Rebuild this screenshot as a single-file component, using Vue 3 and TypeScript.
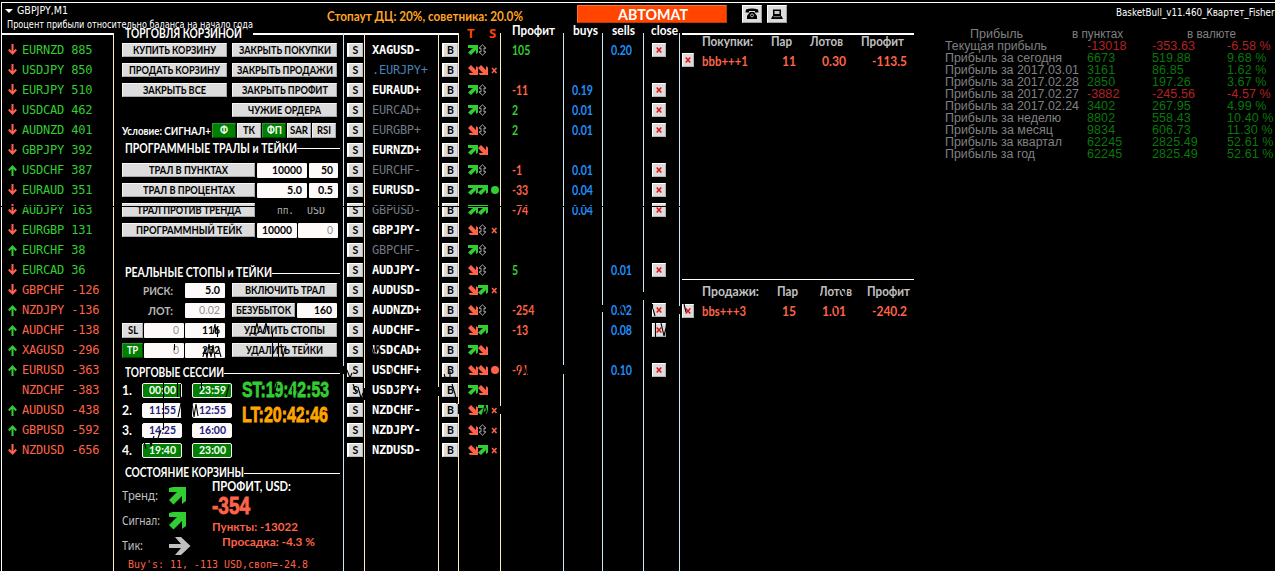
<script setup lang="ts">
import type { Directive } from 'vue'

/** Stretches a text horizontally so that it occupies exactly the given width. */
const vFit: Directive<HTMLElement, number> = {
  mounted(el, binding) {
    const natural = el.getBoundingClientRect().width
    if (!natural || !binding.value) return
    el.style.transform = `scaleX(${binding.value / natural})`
    el.style.marginRight = `${binding.value - natural}px`
  },
}

type Dir = 'up' | 'down' | ''
interface Strength { dir: Dir; pair: string; value: number }
const strengths: Strength[] = [
  { dir: 'down', pair: 'EURNZD', value: 885 },
  { dir: 'down', pair: 'USDJPY', value: 850 },
  { dir: 'down', pair: 'EURJPY', value: 510 },
  { dir: 'down', pair: 'USDCAD', value: 462 },
  { dir: 'down', pair: 'AUDNZD', value: 401 },
  { dir: 'down', pair: 'GBPJPY', value: 392 },
  { dir: 'up', pair: 'USDCHF', value: 387 },
  { dir: 'down', pair: 'EURAUD', value: 351 },
  { dir: 'down', pair: 'AUDJPY', value: 163 },
  { dir: 'down', pair: 'EURGBP', value: 131 },
  { dir: 'up', pair: 'EURCHF', value: 38 },
  { dir: 'down', pair: 'EURCAD', value: 36 },
  { dir: 'down', pair: 'GBPCHF', value: -126 },
  { dir: 'up', pair: 'NZDJPY', value: -136 },
  { dir: 'up', pair: 'AUDCHF', value: -138 },
  { dir: 'up', pair: 'XAGUSD', value: -296 },
  { dir: 'up', pair: 'EURUSD', value: -363 },
  { dir: '', pair: 'NZDCHF', value: -383 },
  { dir: 'up', pair: 'AUDUSD', value: -438 },
  { dir: 'up', pair: 'GBPUSD', value: -592 },
  { dir: 'down', pair: 'NZDUSD', value: -656 },
]

/* sig: trend and signal marks (u = up, d = down, n = neutral), then x = cross, o = dot */
interface Pair { name: string; tone: string; sig: string; profit?: string; buys?: string; sells?: string }
const pairs: Pair[] = [
  { name: 'XAGUSD-', tone: 'lit', sig: 'un', profit: '105', sells: '0.20' },
  { name: '.EURJPY+', tone: 'blue', sig: 'ddx' },
  { name: 'EURAUD+', tone: 'lit', sig: 'un', profit: '-11', buys: '0.19' },
  { name: 'EURCAD+', tone: 'off', sig: 'un', profit: '2', buys: '0.01' },
  { name: 'EURGBP+', tone: 'off', sig: 'dn', profit: '2', buys: '0.01' },
  { name: 'EURNZD+', tone: 'lit', sig: 'ud' },
  { name: 'EURCHF-', tone: 'off', sig: 'un', profit: '-1', buys: '0.01' },
  { name: 'EURUSD-', tone: 'lit', sig: 'uuo', profit: '-33', buys: '0.04' },
  { name: 'GBPUSD-', tone: 'off', sig: 'uu', profit: '-74', buys: '0.04' },
  { name: 'GBPJPY-', tone: 'lit', sig: 'dnx' },
  { name: 'GBPCHF-', tone: 'off', sig: 'un' },
  { name: 'AUDJPY-', tone: 'lit', sig: 'dn', profit: '5', sells: '0.01' },
  { name: 'AUDUSD-', tone: 'lit', sig: 'dux' },
  { name: 'AUDNZD+', tone: 'lit', sig: 'dn', profit: '-254', sells: '0.02' },
  { name: 'AUDCHF-', tone: 'lit', sig: 'du', profit: '-13', sells: '0.08' },
  { name: 'USDCAD+', tone: 'lit', sig: 'ud' },
  { name: 'USDCHF+', tone: 'lit', sig: 'ddo', profit: '-91', sells: '0.10' },
  { name: 'USDJPY+', tone: 'lit', sig: 'ud' },
  { name: 'NZDCHF-', tone: 'lit', sig: 'dux' },
  { name: 'NZDJPY-', tone: 'lit', sig: 'dnx' },
  { name: 'NZDUSD-', tone: 'lit', sig: 'dux' },
]
const digitsWidth = (s: string) => [...s].reduce((w, c) => w + (c === '-' ? 4 : c === '.' ? 3.4 : 6.1), 0)

const sessions = [
  { from: '00:00', to: '23:59', active: true },
  { from: '11:55', to: '12:55', active: false },
  { from: '14:25', to: '16:00', active: false },
  { from: '19:40', to: '23:00', active: true },
]

interface Basket { kind: string; title: [string, number]; heads: string[]; cells: [string, number][] }
const baskets: Basket[] = [
  { kind: 'buy', title: ['Покупки:', 51], heads: ['Пар', 'Лотов', 'Профит'], cells: [['bbb+++1', 46], ['11', 14], ['0.30', 24], ['-113.5', 35]] },
  { kind: 'sell', title: ['Продажи:', 57], heads: ['Пар', 'Лотов', 'Профит'], cells: [['bbs+++3', 44], ['15', 14], ['1.01', 24], ['-240.2', 35]] },
]
const headWidths = [21, 33, 43]

const report: { label: string; w: number; v: string[] }[] = [
  { label: 'Текущая прибыль', w: 102, v: ['-13018', '-353.63', '-6.58 %'] },
  { label: 'Прибыль за сегодня', w: 117, v: ['6673', '519.88', '9.68 %'] },
  { label: 'Прибыль за 2017.03.01', w: 134, v: ['3161', '86.85', '1.62 %'] },
  { label: 'Прибыль за 2017.02.28', w: 134, v: ['2850', '197.26', '3.67 %'] },
  { label: 'Прибыль за 2017.02.27', w: 134, v: ['-3882', '-245.56', '-4.57 %'] },
  { label: 'Прибыль за 2017.02.24', w: 134, v: ['3402', '267.95', '4.99 %'] },
  { label: 'Прибыль за неделю', w: 116, v: ['8802', '558.43', '10.40 %'] },
  { label: 'Прибыль за месяц', w: 108, v: ['9834', '606.73', '11.30 %'] },
  { label: 'Прибыль за квартал', w: 117, v: ['62245', '2825.49', '52.61 %'] },
  { label: 'Прибыль за год', w: 90, v: ['62245', '2825.49', '52.61 %'] },
]
</script>

<template>
  <main class="chart">
    <header class="top">
      <div class="symbol">
        <div class="symbol-name">
          <svg width="8" height="4" viewBox="0 0 8 4"><path d="M0 0H8L4 4Z" fill="#fff" /></svg>
          <span v-fit="51" class="t">GBPJPY,M1</span>
        </div>
        <div class="symbol-note"><span v-fit="246" class="t">Процент прибыли относительно баланса на начало года</span></div>
      </div>
      <div class="stopout"><span v-fit="196" class="t">Стопаут ДЦ: 20%, советника: 20.0%</span></div>
      <button class="auto"><span v-fit="70" class="t">АВТОМАТ</span></button>
      <button class="tool phone">
        <svg width="14" height="12" viewBox="0 0 14 12">
          <path d="M1 1.5Q7-.5 13 1.500L13.5 4.5H10V3H4V4.5H.5Z" fill="#000" />
          <path d="M5 4H9L12 8V11H2V8Z" fill="#000" />
          <circle cx="7" cy="7.400" r="1.500" fill="none" stroke="#ddd" stroke-width=".8" />
        </svg>
      </button>
      <button class="tool">
        <svg width="12" height="12" viewBox="0 0 12 12">
          <path d="M2 1.500H10V8H2Z" fill="#000" /><path d="M3.500 3H8.500V6H3.500Z" fill="#c8c8c8" />
          <path d="M1.500 8H10.500L12 11H0Z" fill="#000" /><path d="M2.500 8.700H9.500" stroke="#ccc" stroke-width=".7" />
        </svg>
      </button>
      <div class="expert"><span v-fit="162" class="t">BasketBull_v11.460_Квартет_Fisher(</span></div>
    </header>

    <div class="board">
      <section class="col strengths">
        <div v-for="s in strengths" :key="s.pair" class="row" :class="s.value > 0 ? 'green' : 'red'">
          <svg class="thin" :class="s.dir" width="9" height="12" viewBox="0 0 9 12">
            <path v-if="s.dir === 'down'" d="M4.5 0V9M.8 5.500L4.500 9.600L8.200 5.500" />
            <path v-if="s.dir === 'up'" d="M4.500 12V3M.8 6.500L4.500 2.400L8.200 6.500" />
          </svg>
          <span class="mono">{{ s.pair }} {{ s.value }}</span>
        </div>
      </section>

      <section class="col control">
        <div class="caption first"><span v-fit="117" class="t">ТОРГОВЛЯ КОРЗИНОЙ</span><i /></div>
        <div class="row">
          <button class="btn w105"><span v-fit="83" class="t">КУПИТЬ КОРЗИНУ</span></button>
          <button class="btn w105 gap5"><span v-fit="92" class="t">ЗАКРЫТЬ ПОКУПКИ</span></button>
        </div>
        <div class="row">
          <button class="btn w105"><span v-fit="91" class="t">ПРОДАТЬ КОРЗИНУ</span></button>
          <button class="btn w105 gap5"><span v-fit="96" class="t">ЗАКРЫТЬ ПРОДАЖИ</span></button>
        </div>
        <div class="row">
          <button class="btn w105"><span v-fit="63" class="t">ЗАКРЫТЬ ВСЕ</span></button>
          <button class="btn w105 gap5"><span v-fit="86" class="t">ЗАКРЫТЬ ПРОФИТ</span></button>
        </div>
        <div class="row end"><button class="btn w105"><span v-fit="73" class="t">ЧУЖИЕ ОРДЕРА</span></button></div>
        <div class="row cond">
          <span v-fit="89" class="t">Условие: СИГНАЛ+</span>
          <button class="btn tall on"><span v-fit="8" class="t">Ф</span></button>
          <button class="btn tall"><span v-fit="12" class="t">ТК</span></button>
          <button class="btn tall on"><span v-fit="15" class="t">ФП</span></button>
          <button class="btn tall"><span v-fit="18" class="t">SAR</span></button>
          <button class="btn tall"><span v-fit="14" class="t">RSI</span></button>
        </div>

        <div class="caption up"><span v-fit="172" class="t">ПРОГРАММНЫЕ ТРАЛЫ и ТЕЙКИ</span><i /></div>
        <div class="row">
          <button class="btn w133"><span v-fit="79" class="t">ТРАЛ В ПУНКТАХ</span></button>
          <span class="field w50"><span v-fit="30" class="t">10000</span></span>
          <span class="field w30"><span v-fit="12" class="t">50</span></span>
        </div>
        <div class="row">
          <button class="btn w133"><span v-fit="92" class="t">ТРАЛ В ПРОЦЕНТАХ</span></button>
          <span class="field w50"><span v-fit="15" class="t">5.0</span></span>
          <span class="field w30"><span v-fit="15" class="t">0.5</span></span>
        </div>
        <div class="row">
          <button class="btn w133"><span v-fit="104" class="t">ТРАЛ ПРОТИВ ТРЕНДА</span></button>
          <span class="units"><span v-fit="17" class="t">пп.</span><span v-fit="18" class="t">USD</span></span>
        </div>
        <div class="row">
          <button class="btn w133"><span v-fit="106" class="t">ПРОГРАММНЫЙ ТЕЙК</span></button>
          <span class="field w40"><span v-fit="30" class="t">10000</span></span>
          <span class="field w40 dim"><span v-fit="6" class="t">0</span></span>
        </div>
        <div class="row" />

        <div class="caption"><span v-fit="147" class="t">РЕАЛЬНЫЕ СТОПЫ и ТЕЙКИ</span><i /></div>
        <div class="row">
          <span class="flabel"><span v-fit="30" class="t">РИСК:</span></span>
          <span class="field w40"><span v-fit="15" class="t">5.0</span></span>
          <button class="btn w105 gap7"><span v-fit="80" class="t">ВКЛЮЧИТЬ ТРАЛ</span></button>
        </div>
        <div class="row">
          <span class="flabel"><span v-fit="25" class="t">ЛОТ:</span></span>
          <span class="field w40 dim"><span v-fit="21" class="t">0.02</span></span>
          <button class="btn w63 gap7"><span v-fit="55" class="t">БЕЗУБЫТОК</span></button>
          <span class="field w40"><span v-fit="18" class="t">160</span></span>
        </div>
        <div class="row">
          <button class="btn tall sq"><span v-fit="10" class="t">SL</span></button>
          <span class="field w40 dim"><span v-fit="6" class="t">0</span></span>
          <span class="field w40"><span v-fit="18" class="t">116</span></span>
          <button class="btn w105 gap7"><span v-fit="81" class="t">УДАЛИТЬ СТОПЫ</span></button>
        </div>
        <div class="row">
          <button class="btn tall sq on"><span v-fit="11" class="t">TP</span></button>
          <span class="field w40 dim"><span v-fit="6" class="t">0</span></span>
          <span class="field w40"><span v-fit="18" class="t">232</span></span>
          <button class="btn w105 gap7"><span v-fit="77" class="t">УДАЛИТЬ ТЕЙКИ</span></button>
        </div>

        <div class="caption"><span v-fit="99" class="t">ТОРГОВЫЕ СЕССИИ</span><i /></div>
        <div class="times">
          <div class="sessions">
            <div v-for="(s, i) in sessions" :key="i" class="row">
              <span class="num"><span v-fit="10" class="t">{{ i + 1 }}.</span></span>
              <span class="field time" :class="{ active: s.active }"><span v-fit="27" class="t">{{ s.from }}</span></span>
              <span class="field time" :class="{ active: s.active }"><span v-fit="27" class="t">{{ s.to }}</span></span>
            </div>
          </div>
          <div class="clocks">
            <div class="impact st"><span v-fit="87" class="t">ST:19:42:53</span></div>
            <div class="impact lt"><span v-fit="86" class="t">LT:20:42:46</span></div>
          </div>
        </div>

        <div class="caption"><span v-fit="119" class="t">СОСТОЯНИЕ КОРЗИНЫ</span><i /></div>
        <div class="state">
          <div class="trends">
            <div><span v-fit="36" class="t">Тренд:</span></div>
            <svg width="18" height="18" viewBox="0 0 18 18"><path d="M0 1L4 0H17V14L13 17V9L4.500 17.500L0 13L8 5H0Z" fill="#32cd32" /></svg>
            <div><span v-fit="38" class="t">Сигнал:</span></div>
            <svg width="18" height="18" viewBox="0 0 18 18"><path d="M0 1L4 0H17V14L13 17V9L4.500 17.500L0 13L8 5H0Z" fill="#32cd32" /></svg>
            <div><span v-fit="21" class="t">Тик:</span></div>
            <svg width="22" height="18" viewBox="0 0 22 18"><path d="M0 7H12L6 0H12L21.500 9L12 18H6L12 11H0Z" fill="#c0c0c0" /></svg>
          </div>
          <div class="result">
            <div class="ptitle"><span v-fit="79" class="t">ПРОФИТ, USD:</span></div>
            <div class="impact total"><span v-fit="38" class="t">-354</span></div>
            <div class="points"><span v-fit="86" class="t">Пункты: -13022</span></div>
            <div class="drop"><span v-fit="93" class="t">Просадка: -4.3 %</span></div>
          </div>
        </div>
        <div class="summary"><span v-fit="180" class="t">Buy's: 11, -113 USD,своп=-24.8</span></div>
      </section>

      <section class="col ice sell-btns"><div v-for="p in pairs" :key="p.name" class="row"><button class="key">S</button></div></section>
      <section class="col names">
        <div v-for="p in pairs" :key="p.name" class="row" :class="p.tone"><span class="mono">{{ p.name }}</span></div>
      </section>
      <section class="col buy-btns"><div v-for="p in pairs" :key="p.name" class="row"><button class="key">B</button></div></section>
      <section class="col marks">
        <div class="head ts"><span>T</span><span>S</span></div>
        <div v-for="p in pairs" :key="p.name" class="row">
          <svg v-for="(c, i) in p.sig.split('')" :key="i" :class="'m' + i" width="10" height="12" viewBox="0 0 10 12">
            <path v-if="c === 'u'" d="M0 1H10V8.500L8 10V6L3 11L0 8.500L5 4H0Z" fill="#32cd32" />
            <path v-else-if="c === 'd'" d="M10 11H2L.5 9H5L0 4L3 1L8 6V2L10 3.500Z" fill="#ff6347" />
            <path v-else-if="c === 'n'" d="M4.500 .8L8 4.200H6V7.800H8L4.500 11.200L1 7.800H3V4.200H1Z" fill="none" stroke="#b8b8b8" stroke-width=".9" />
            <path v-else-if="c === 'x'" d="M2 4L6.500 9M6.500 4L2 9" stroke="#ff6347" stroke-width="1.500" />
            <circle v-else cx="5" cy="6" r="4" :fill="p.sig[0] === 'u' ? '#32cd32' : '#ff6347'" />
          </svg>
        </div>
      </section>
      <section class="col profit">
        <div class="head"><span v-fit="43" class="t">Профит</span></div>
        <div v-for="p in pairs" :key="p.name" class="row" :class="p.profit?.startsWith('-') ? 'red' : 'green'">
          <span v-if="p.profit" v-fit="digitsWidth(p.profit)" class="t">{{ p.profit }}</span>
        </div>
      </section>
      <section class="col ice buys">
        <div class="head"><span v-fit="25" class="t">buys</span></div>
        <div v-for="p in pairs" :key="p.name" class="row"><span v-if="p.buys" v-fit="21" class="t">{{ p.buys }}</span></div>
      </section>
      <section class="col ice sells">
        <div class="head"><span v-fit="23" class="t">sells</span></div>
        <div v-for="p in pairs" :key="p.name" class="row"><span v-if="p.sells" v-fit="21" class="t">{{ p.sells }}</span></div>
      </section>
      <section class="col ice close">
        <div class="head"><span v-fit="27" class="t">close</span></div>
        <div v-for="p in pairs" :key="p.name" class="row">
          <button v-if="p.profit" class="kill"><svg width="6" height="6" viewBox="0 0 6 6"><path d="M.7 .5L5.300 5.500M5.300 .5L.7 5.500" /></svg></button>
        </div>
      </section>

      <section class="col ice baskets">
        <div v-for="b in baskets" :key="b.kind" class="basket" :class="b.kind">
          <div class="bhead">
            <span class="c0"><span v-fit="b.title[1]" class="t">{{ b.title[0] }}</span></span>
            <span v-for="(h, i) in b.heads" :key="h"><span v-fit="headWidths[i]" class="t">{{ h }}</span></span>
          </div>
          <div class="brow">
            <button class="kill"><svg width="6" height="6" viewBox="0 0 6 6"><path d="M.7 .5L5.300 5.500M5.300 .5L.7 5.500" /></svg></button>
            <span v-for="(c, i) in b.cells" :key="i"><span v-fit="c[1]" class="t">{{ c[0] }}</span></span>
          </div>
        </div>
      </section>

      <section class="report">
        <div class="rhead">
          <span><span v-fit="53" class="t">Прибыль</span></span><span><span v-fit="51" class="t">в пунктах</span></span><span><span v-fit="49" class="t">в валюте</span></span>
        </div>
        <div v-for="r in report" :key="r.label" class="rrow" :class="{ loss: r.v[0].startsWith('-') }">
          <span><span v-fit="r.w" class="t">{{ r.label }}</span></span>
          <span v-for="v in r.v" :key="v" class="val">{{ v }}</span>
        </div>
      </section>
    </div>

    <!-- black price line of the chart, drawn above the panel objects -->
    <svg class="price" width="1275" height="571" viewBox="0 0 1275 571">
      <path d="M0 206.500H682" />
      <path d="M213 334L215 324L216 334M217.500 327V337M203 357L205 348L207 358L209 344L211 357L213 345L215 358M218 346L221 357" />
      <path d="M254 335L257 323L259 333M263 333L266 323L269 334M272.500 333V357M278.500 343V357M281 344L283 357L285 348" />
      <path d="M163.500 383V398M163.500 403V430M177.500 383V397M180.500 384V398M178 417L181 403M181.500 403V417M201.500 383V390M226 397L229 385M192 403L194 417L196 404L198 416" />
      <path d="M143 437L146 449M149 438L151 446L154 436M158 438L161 430M174.500 350V344" />
      <path d="M274 394L277 383M286 395L289 385M292.500 386V396M296 397L298 388M304 410L306 420" />
      <path d="M347 370L350 378L352 373M353 384L356 392M358 387L361 398L364 391M343.500 366V374M364.500 388V400M438.500 387V396M444 374L446 380M450 371V380M452 384L455 394L457 404M458.500 404V414M500.500 406V414" />
      <path d="M372 345L375 357L378 346L381 356M391 368V376M397 390L401 385M404 392L408 386M410 412L414 405M482 416L485 405L488 415" />
      <path d="M517 376L520 366M521 377L524 366L527 376M619 314L622 306L625 314M652.500 304V309M653 309L655 316M655.500 323V337M661 323L664 336L667 324M602.500 305V312M643.500 292V300M563.500 365V374M679.500 306V314M684 304L686 312" />
      <path d="M820 297L817 286M841 289L844 296L847 288M834 307L837 315" />
    </svg>
  </main>
</template>

<style>
html, body { margin: 0; background: #000; overflow: hidden; }
</style>

<style scoped>
.chart { position: relative; width: 1275px; height: 571px; overflow: hidden; background: #000; color: #fff; font-family: Lato, "Noto Sans", sans-serif; font-weight: 700; font-size: 12px; }
.chart, .chart * { box-sizing: border-box; }
.t { display: inline-block; white-space: pre; transform-origin: 0 50%; flex: none; }
svg { display: block; flex: none; }
button { font: inherit; padding: 0; margin: 0; border: 0; border-radius: 0; flex: none; display: flex; align-items: center; justify-content: center; white-space: nowrap; }

.top { display: flex; height: 22px; margin-left: 1px; border-top: 1px solid #fff; border-left: 1px solid #fff; margin-top: 2px; }
.symbol { flex: none; width: 325px; font: 400 11px/14px "DejaVu Sans Condensed", "DejaVu Sans", sans-serif; padding-left: 3px; }
.symbol-name { display: flex; align-items: center; gap: 4px; height: 16px; }
.symbol-note { padding-left: 2px; line-height: 12px; }
.stopout { flex: none; width: 250px; color: #ffa520; line-height: 27px; font-size: 12.500px; }
.auto { width: 150px; height: 18px; margin-top: 2px; background: #ff4500; border: 1px solid; border-color: #ff7038 #c03808 #c03808 #ff7038; color: #fff; font-size: 15px; padding-left: 2px; }
.tool { width: 20px; height: 18px; margin-top: 2px; background: #dcdcdc; border: 1px solid; border-color: #fff #a0a0a0 #a0a0a0 #fff; margin-left: 5px; }
.phone { margin-left: 15px; }
.expert { flex: none; margin-left: 329px; font: 400 10.500px/18px "DejaVu Sans Condensed", "DejaVu Sans", sans-serif; white-space: nowrap; }

.board { display: grid; grid-template-columns: 112px 230px 21px 74px 20px 42px 63px 39px 41px 36px 266px 330px; height: 547px; margin-left: 1px; }
.col { padding-top: 16px; background: linear-gradient(#ffeec0, #ffeec0) 0 9px / 1px 100% no-repeat; min-width: 0; height: 547px; }
.ice { background-image: linear-gradient(#c4e8f4, #c4e8f4); }
.strengths { background: linear-gradient(#fff, #fff) 0 0 / 1px 100% no-repeat, linear-gradient(#fff, #fff) 0 9px / 112px 2px no-repeat; }
.row { display: flex; align-items: center; height: 20px; white-space: nowrap; }
.green { color: #32cd32; }
.red { color: #ff6347; }
.mono { font: 400 12px/18px "DejaVu Sans Mono", monospace; letter-spacing: -.2px; white-space: pre; }
.strengths .row { padding-left: 7px; gap: 5px; }
.thin { fill: none; stroke-width: 2; }
.thin.down { stroke: #ff6347; }
.thin.up { stroke: #32cd32; }

.control { padding-left: 9px; padding-top: 0; }
.caption { display: flex; align-items: center; height: 20px; padding: 6px 3px 0 3px; line-height: 14px; font-size: 12.500px; }
.caption i { flex: 1; height: 1px; background: #fff; }
.caption.first { height: 16px; padding-top: 3px; padding-right: 0; }
.caption.first i { height: 2px; margin-left: 11px; }
.caption.up { padding-top: 0; padding-bottom: 3px; }
.btn { height: 14px; background: #dcdcdc; color: #000; border: 1px solid; border-color: #f6f6f6 #a8a8a8 #a8a8a8 #f6f6f6; font-size: 11.500px; line-height: 12px; }
.w105 { width: 105px; }
.w133 { width: 133px; }
.w63 { width: 63px; }
.gap5 { margin-left: 5px; }
.gap7 { margin-left: 7px; }
.end { padding-left: 110px; }
.tall { height: 15px; }
.on { background: #008000; color: #fff; border-color: #389038 #004800 #004800 #389038; }
.cond { font-size: 12px; }
.cond .btn { width: 24px; margin-left: 1px; }
.sq { width: 21px; }
.field { display: flex; align-items: center; justify-content: flex-end; flex: none; height: 15px; background: #fffafa; color: #000; border-radius: 1px; padding-right: 5px; line-height: 14px; margin-left: 1px; }
.w50 { width: 50px; margin-left: 2px; }
.w30 { width: 29px; margin-left: 2px; }
.w40 { width: 40px; }
.w133 + .w40 { margin-left: 2px; }
.w63 + .w40 { margin-left: 2px; }
.dim { color: #909090; font-weight: 400; }
.units { display: flex; gap: 13px; padding-left: 22px; color: #b0b0b0; font: 400 10.500px/14px "DejaVu Sans Mono", monospace; }
.flabel { display: flex; justify-content: flex-end; width: 51px; margin-right: 11px; color: #b8b8b8; }
.num { width: 20px; font-size: 13px; }
.times { display: flex; }
.sessions { width: 120px; }
.time { width: 40px; margin: 0 10px 0 0; justify-content: center; padding: 0; color: #20207a; border: 1px solid #fffafa; border-radius: 2px; height: 15px; }
.time.active { background: #008000; color: #fff; }
.impact { font: 700 22px/24px "Liberation Sans", sans-serif; -webkit-text-stroke: .8px currentColor; }
.st { color: #32cd32; height: 25px; line-height: 19px; }
.lt { color: #ffa500; line-height: 19px; }
.state { display: flex; height: 74px; }
.trends { display: grid; grid-template-columns: 47px 24px; grid-auto-rows: 25px; width: 90px; padding-top: 3px; align-items: center; color: #c0c0c0; font: 400 12.500px/16px "Noto Sans", sans-serif; }
.ptitle { line-height: 13px; font-size: 12.500px; }
.total { color: #ff6347; height: 26px; font-size: 23px; line-height: 27px; }
.points, .drop { color: #ff6347; line-height: 15px; }
.drop { padding-left: 10px; }
.summary { padding: 2px 0 0 6px; color: #ff6347; font: 400 10.500px/16px "DejaVu Sans Mono", monospace; }

.key { width: 16px; height: 14px; margin-left: 4px; background: #dcdcdc; color: #000; border: 1px solid; border-color: #fff #b8b8b8 #b8b8b8 #fff; border-left-width: 2px; font-size: 10.500px; line-height: 12px; }
.sell-btns { background: linear-gradient(#c4e8f4, #c4e8f4) 0 9px / 1px 100% no-repeat, linear-gradient(#fff, #fff) 0 9px / 100% 2px no-repeat; }
.names, .buy-btns { background: linear-gradient(#ffeec0, #ffeec0) 0 9px / 1px 100% no-repeat, linear-gradient(#fff, #fff) 0 9px / 100% 2px no-repeat; }
.names .row { padding-left: 8px; }
.names .mono { font-weight: 700; letter-spacing: -.25px; }
.names .off { color: #707880; }
.names .off .mono, .names .blue .mono { font-weight: 400; }
.names .blue { color: #4682b4; }
.marks, .profit, .buys, .sells, .close { padding-top: 0; }
.head { height: 16px; line-height: 14px; font-size: 12.500px; padding-left: 10px; white-space: nowrap; }
.ts { display: flex; gap: 14px; padding-left: 9px; color: #ff4500; font: 700 13px/19px "Open Sans", sans-serif; }
.ts span { width: 8px; }
.marks .row { padding-left: 10px; }
.m2 { margin-left: 2px; }
.profit .row, .buys .row, .sells .row { font-size: 12.500px; }
.profit .row { padding-left: 12px; }
.profit .head { padding-left: 12px; }
.buys .row, .sells .row { padding-left: 9px; color: #1e90ff; }
.close .head { padding-left: 8px; }
.close .row { padding-left: 9px; }
.kill { width: 14px; height: 14px; background: #dcdcdc; border: 1px solid; border-color: #fff #b0b0b0 #b0b0b0 #fff; }
.kill path { stroke: #e81010; stroke-width: 1.500; fill: none; }

.baskets { padding: 9px 31px 0 3px; }
.basket { height: 246px; border-top: 2px solid #fff; color: #c0c0c0; font-size: 12.500px; }
.sell { border-top-width: 1px; }
.bhead, .brow { display: grid; grid-template-columns: 20px 69px 39px 51px 53px; height: 20px; line-height: 14px; }
.bhead .c0 { grid-column: 2; }
.sell .bhead { grid-template-columns: 20px 75px 42px 48px 47px; padding-top: 5px; height: 25px; }
.brow { grid-template-columns: 20px 80px 40px 50px 42px; color: #ff6347; line-height: 14px; }
.brow .kill { width: 12px; margin-top: -2px; }
.sell .kill { margin-top: -1px; }

.report { padding-top: 4px; color: #808080; font: 400 12.500px/12px "Liberation Sans", sans-serif; }
.rhead { display: grid; grid-template-columns: 102px 115px 80px; padding-left: 25px; height: 12px; }
.rrow { display: grid; grid-template-columns: 142px 65px 75px 48px; height: 12px; white-space: nowrap; }
.val { color: #087808; letter-spacing: .1px; }
.loss .val { color: #b22222; }

.price { position: absolute; left: 0; top: 0; pointer-events: none; }
.price path { fill: none; stroke: #000; stroke-width: 1.100; }
</style>
